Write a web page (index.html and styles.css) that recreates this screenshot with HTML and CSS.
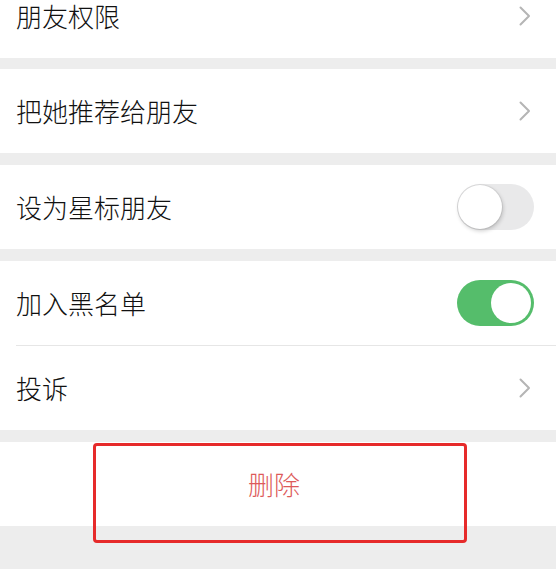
FILE: index.html
```html
<!DOCTYPE html>
<html lang="zh-CN">
<head>
<meta charset="utf-8">
<title>资料设置</title>
<link rel="stylesheet" href="styles.css">
</head>
<body>
<div class="page">
  <section class="group first">
    <div class="row">
      <span class="label">朋友权限</span>
      <svg class="chev" viewBox="0 0 12 20" width="12" height="20"><polyline points="1.5,1.5 10,10 1.5,18.5"/></svg>
    </div>
  </section>
  <section class="group">
    <div class="row">
      <span class="label">把她推荐给朋友</span>
      <svg class="chev" viewBox="0 0 12 20" width="12" height="20"><polyline points="1.5,1.5 10,10 1.5,18.5"/></svg>
    </div>
  </section>
  <section class="group">
    <div class="row">
      <span class="label">设为星标朋友</span>
      <span class="switch off"><span class="knob"></span></span>
    </div>
  </section>
  <section class="group">
    <div class="row divided">
      <span class="label">加入黑名单</span>
      <span class="switch on"><span class="knob"></span></span>
    </div>
    <div class="row">
      <span class="label">投诉</span>
      <svg class="chev" viewBox="0 0 12 20" width="12" height="20"><polyline points="1.5,1.5 10,10 1.5,18.5"/></svg>
    </div>
  </section>
  <section class="group">
    <div class="row center">
      <span class="danger">删除</span>
    </div>
  </section>
  <div class="highlight"></div>
</div>
</body>
</html>
```
FILE: styles.css
```css
html, body {
  margin: 0;
  padding: 0;
  background: #ededed;
  overflow: hidden;
}
body {
  width: 556px;
  height: 569px;
  font-family: "Noto Sans CJK SC", "Noto Sans", sans-serif;
}
.page {
  position: relative;
  display: flex;
  flex-direction: column;
  gap: 12px;
}
.group {
  background: #ffffff;
}
.group.first {
  margin-top: -26px;
  margin-bottom: -1px;
}
.row {
  position: relative;
  height: 84px;
  display: flex;
  align-items: center;
  justify-content: space-between;
  padding: 0 22px 0 16px;
}
.row.divided::after {
  content: "";
  position: absolute;
  left: 16px;
  right: 0;
  bottom: -1px;
  height: 1px;
  background: #e6e6e6;
}
.row.divided {
  margin-bottom: 1px;
}
.label {
  font-size: 26px;
  font-weight: 300;
  color: #111111;
  line-height: 1;
}
.chev {
  margin-right: 3px;
}
.chev polyline {
  fill: none;
  stroke: #b5b5b5;
  stroke-width: 2;
  stroke-linecap: round;
  stroke-linejoin: round;
}
.switch {
  position: relative;
  width: 77px;
  height: 46px;
  border-radius: 23px;
  box-sizing: border-box;
  flex: none;
}
.switch.off {
  background: #e9e9ea;
}
.switch.off .knob {
  position: absolute;
  left: 1px;
  top: 1px;
  width: 44px;
  height: 44px;
  border-radius: 50%;
  background: #ffffff;
  box-shadow: 0 0 0 1px rgba(0,0,0,0.06), 1px 2px 4px rgba(0,0,0,0.2);
}
.switch.on {
  background: #55bd6b;
}
.switch.on .knob {
  position: absolute;
  right: 3px;
  top: 3px;
  width: 40px;
  height: 40px;
  border-radius: 50%;
  background: #ffffff;
}
.row.center {
  justify-content: center;
  padding: 0 8px 0 0;
}
.danger {
  font-size: 26px;
  font-weight: 300;
  color: #dd5a5a;
  line-height: 1;
}
.highlight {
  position: absolute;
  left: 93px;
  top: 443px;
  width: 374px;
  height: 100px;
  box-sizing: border-box;
  border: 3px solid #e62a2a;
  border-radius: 4px;
}
```
